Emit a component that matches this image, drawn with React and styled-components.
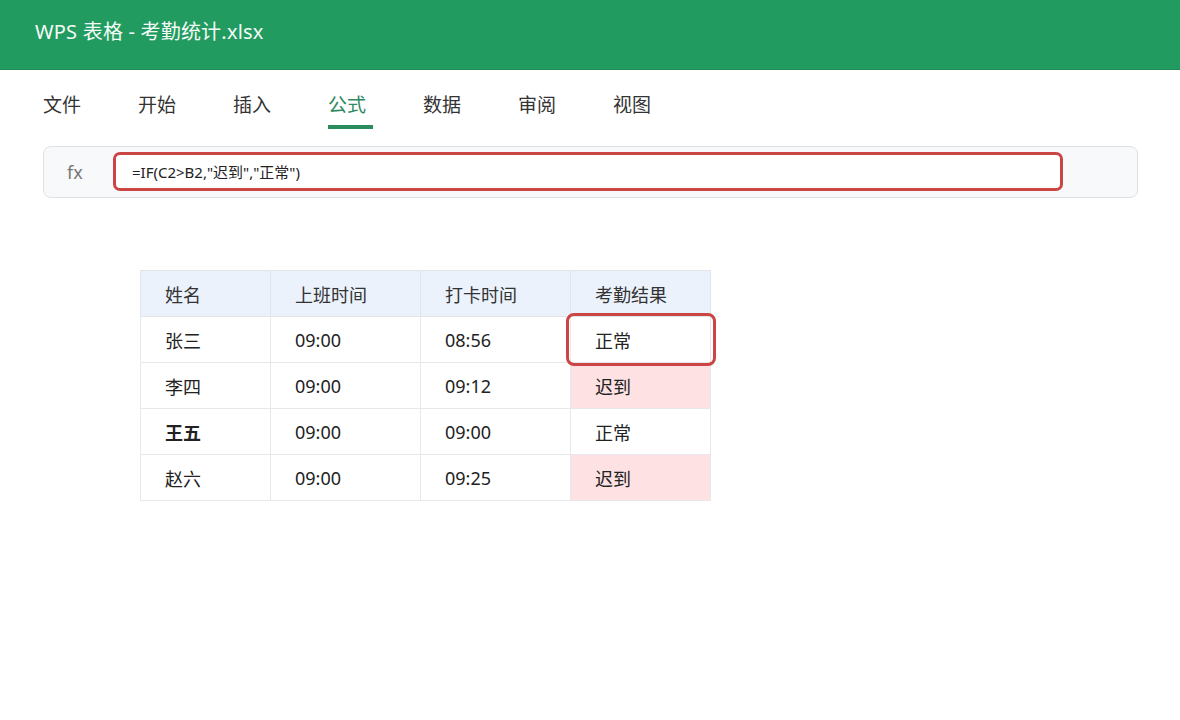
import React from "react";
import styled, { createGlobalStyle } from "styled-components";

const GlobalStyle = createGlobalStyle`
  html, body {
    margin: 0;
    padding: 0;
    background: #ffffff;
  }
  body {
    font-family: "Noto Sans", "Noto Sans CJK SC", sans-serif;
    color: #222;
  }
`;

const tabs = ["文件", "开始", "插入", "公式", "数据", "审阅", "视图"];

const rows = [
  { name: "张三", start: "09:00", punch: "08:56", result: "正常", late: false, mark: true },
  { name: "李四", start: "09:00", punch: "09:12", result: "迟到", late: true },
  { name: "王五", start: "09:00", punch: "09:00", result: "正常", late: false, bold: true },
  { name: "赵六", start: "09:00", punch: "09:25", result: "迟到", late: true },
];

export default function App() {
  return (
    <Page>
      <GlobalStyle />
      <Header>
        <Title>WPS 表格 - 考勤统计.xlsx</Title>
      </Header>

      <TabBar>
        {tabs.map((t) => (
          <Tab key={t} $active={t === "公式"}>
            {t}
          </Tab>
        ))}
      </TabBar>

      <FormulaBar>
        <Fx>fx</Fx>
        <FormulaInput>=IF(C2&gt;B2,"迟到","正常")</FormulaInput>
      </FormulaBar>

      <TableWrap>
        <Sheet>
          <colgroup>
            <col style={{ width: 130 }} />
            <col style={{ width: 150 }} />
            <col style={{ width: 150 }} />
            <col style={{ width: 140 }} />
          </colgroup>
          <thead>
            <tr>
              <Th>姓名</Th>
              <Th>上班时间</Th>
              <Th>打卡时间</Th>
              <Th>考勤结果</Th>
            </tr>
          </thead>
          <tbody>
            {rows.map((r) => (
              <tr key={r.name}>
                <Td $bold={r.bold}>{r.name}</Td>
                <Td>{r.start}</Td>
                <Td>{r.punch}</Td>
                <ResultCell $late={r.late}>
                  {r.result}
                  {r.mark && <Highlight />}
                </ResultCell>
              </tr>
            ))}
          </tbody>
        </Sheet>
      </TableWrap>
    </Page>
  );
}

const Page = styled.div`
  width: 1180px;
  height: 720px;
  background: #fff;
  overflow: hidden;
`;

const Header = styled.div`
  height: 70px;
  background: #229b60;
  display: flex;
  align-items: center;
  padding: 0 35px;
  box-sizing: border-box;
  border-bottom: 1px solid #1e8a55;
`;

const Title = styled.div`
  color: #f4fbf7;
  font-size: 20px;
  margin-top: -9px;
  letter-spacing: 0.2px;
`;

const TabBar = styled.div`
  display: flex;
  padding: 21px 43px 0;
  height: 57px;
  box-sizing: border-box;
`;

const Tab = styled.div`
  width: 95px;
  font-size: 19px;
  line-height: 28px;
  color: ${(p) => (p.$active ? "#2f8a5f" : "#333")};
  position: relative;
  white-space: nowrap;

  &::after {
    content: "";
    display: ${(p) => (p.$active ? "block" : "none")};
    position: absolute;
    left: 0;
    top: 34px;
    width: 45px;
    height: 4px;
    background: #2b8d5c;
  }
`;

const FormulaBar = styled.div`
  margin: 19px 42px 0 43px;
  height: 52px;
  border: 1.5px solid #dde1e4;
  border-radius: 8px;
  background: #f8f9fa;
  display: flex;
  align-items: center;
  box-sizing: border-box;
`;

const Fx = styled.div`
  width: 69px;
  padding-left: 23px;
  box-sizing: border-box;
  font-size: 18px;
  color: #777;
`;

const FormulaInput = styled.div`
  width: 950px;
  height: 39px;
  box-sizing: border-box;
  border: 3.5px solid #cc4545;
  border-radius: 7px;
  background: #fff;
  padding: 0 0 0 16px;
  display: flex;
  align-items: center;
  font-size: 15px;
  color: #222;
  margin-top: -2px;
`;

const TableWrap = styled.div`
  padding: 72px 0 0 140px;
`;

const Sheet = styled.table`
  border-collapse: collapse;
  table-layout: fixed;
  width: 570px;
  font-size: 18px;
`;

const Th = styled.th`
  height: 46px;
  padding: 0 0 0 24px;
  text-align: left;
  font-weight: 400;
  color: #333;
  background: #ebf2fc;
  border: 1px solid #e2e6eb;
  box-sizing: border-box;
`;

const Td = styled.td`
  height: 46px;
  padding: 0 0 0 24px;
  border: 1px solid #e6e8eb;
  color: #222;
  font-weight: ${(p) => (p.$bold ? 700 : 400)};
  box-sizing: border-box;
`;

const ResultCell = styled(Td)`
  position: relative;
  background: ${(p) => (p.$late ? "#fde1e3" : "#fff")};
`;

const Highlight = styled.span`
  position: absolute;
  z-index: 2;
  left: -5px;
  right: -6px;
  top: -4px;
  bottom: -4px;
  border: 3.5px solid #cc4545;
  border-radius: 8px;
  pointer-events: none;
`;
